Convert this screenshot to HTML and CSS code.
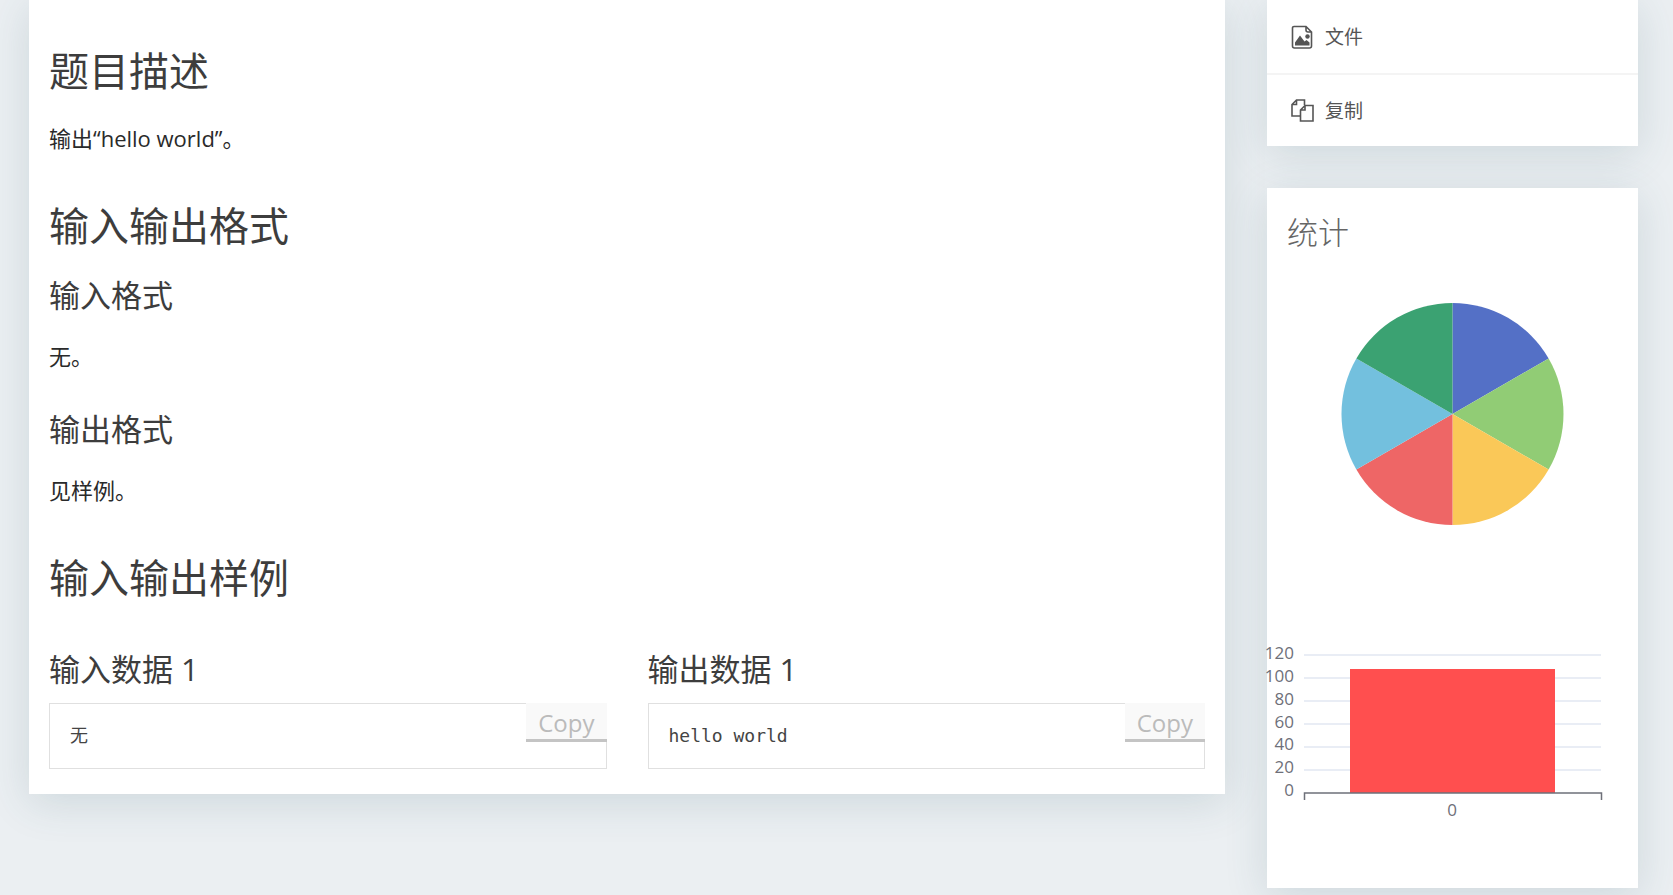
FILE: index.html
```html
<!DOCTYPE html>
<html lang="zh-CN">
  <head>
    <meta charset="utf-8">
    <title>题目描述</title>
    <link rel="stylesheet" href="styles.css">
  </head>

  <body>
    <div class="container">

      <main class="card problem">
        <h2>题目描述</h2>
        <p>输出“hello world”。</p>

        <h2>输入输出格式</h2>
        <h3>输入格式</h3>
        <p>无。</p>
        <h3>输出格式</h3>
        <p>见样例。</p>

        <h2>输入输出样例</h2>
        <div class="samples">
          <section>
            <h3>输入数据 1</h3>
            <div class="sample">
              <pre>无</pre>
              <button type="button" class="copy">Copy</button>
            </div>
          </section>
          <section>
            <h3>输出数据 1</h3>
            <div class="sample">
              <pre>hello world</pre>
              <button type="button" class="copy">Copy</button>
            </div>
          </section>
        </div>
      </main>

      <aside class="side">
        <nav class="card menu">
          <a href="#files">
            <svg class="icon" viewBox="0 0 24 24">
              <path d="M3 1.500h12l5.500 5.500v14a2 2 0 0 1-2 2h-15a2 2 0 0 1-2-2v-18a1.500 1.500 0 0 1 1.500-1.500z M15 1.500v3.500a2 2 0 0 0 2 2h3.500" fill="none" stroke="#555" stroke-width="1.600"/>
              <path d="M4 20.500v-3l5-7 4.500 6 2-1.500 3 2.500v3z" fill="#555"/>
              <circle cx="16.500" cy="11.500" r="2.200" fill="#555"/>
            </svg>
            <span>文件</span>
          </a>
          <a href="#copy">
            <svg class="icon" viewBox="0 0 24 24" fill="none" stroke="#555" stroke-width="1.600">
              <path d="M9 17h-8v-11.500l4.500-4.500h8v5 M1 5.500h4.500v-4.500"/>
              <path d="M9.500 11l4.500-4.500h8v15.500h-12.500z M9.500 11h4.500v-4.500"/>
            </svg>
            <span>复制</span>
          </a>
        </nav>

        <section class="card stats">
          <h3>统计</h3>

          <!-- pie: six equal slices -->
          <svg class="chart" viewBox="0 0 371 340" role="img" aria-label="统计">
            <g transform="translate(185.500 152)">
              <path fill="#5470c6" d="M0 0V-111A111 111 0 0 1 96.130-55.500z"/>
              <path fill="#91cc75" d="M0 0L96.130-55.500A111 111 0 0 1 96.130 55.500z"/>
              <path fill="#fac858" d="M0 0L96.130 55.500A111 111 0 0 1 0 111z"/>
              <path fill="#ee6666" d="M0 0V111A111 111 0 0 1-96.130 55.500z"/>
              <path fill="#73c0de" d="M0 0L-96.130 55.500A111 111 0 0 1-96.130-55.500z"/>
              <path fill="#3ba272" d="M0 0L-96.130-55.500A111 111 0 0 1 0-111z"/>
            </g>
          </svg>

          <!-- bar -->
          <svg class="chart" viewBox="0 0 371 286">
            <g stroke="#e9edf5" stroke-width="2">
              <path d="M37 53h297M37 76h297M37 99h297M37 122h297M37 145h297M37 168h297"/>
            </g>
            <rect x="83" y="67" width="205" height="124" fill="#ff4f4f"/>
            <path d="M37.500 198v-7h297v7" fill="none" stroke="#6e7079" stroke-width="1.500"/>
            <g class="axis" text-anchor="end">
              <text x="27" y="57">120</text>
              <text x="27" y="80">100</text>
              <text x="27" y="103">80</text>
              <text x="27" y="126">60</text>
              <text x="27" y="148">40</text>
              <text x="27" y="171">20</text>
              <text x="27" y="194">0</text>
            </g>
            <text class="axis" x="185" y="214" text-anchor="middle">0</text>
          </svg>
        </section>
      </aside>

    </div>
  </body>
</html>
```

FILE: styles.css
```css
* { box-sizing: border-box; }
body {
  margin: 0;
  background-color: #ebeff2;
  color: #2a2a2a;
  font-family: "Open Sans", "Noto Sans CJK SC", sans-serif;
  font-size: 22px;
  line-height: 34px;
}
.container {
  display: grid;
  grid-template-columns: minmax(0, 1fr) 371px;
  align-items: start;
  gap: 42px;
  padding: 0 35px 7px 29px;
}
.card {
  background-color: #fff;
  box-shadow: 0 8px 40px rgba(50, 95, 105, 0.16);
}
h2, h3 { color: #3d3d3d; font-weight: 400; }
h2 { margin: 43px 0 19px; font-size: 40px; line-height: 56px; }
h3 { margin: 0; font-size: 31px; line-height: 44px; }
p { margin: 22px 0 34px; }

.problem { display: flow-root; padding: 0 20px 25px; }
.samples {
  display: grid;
  grid-template-columns: 1fr 1fr;
  gap: 41px;
  margin-top: 41px;
}
.samples h3 { margin-bottom: 12px; }
.sample { position: relative; border: 1px solid #e0e0e0; }
.sample pre {
  margin: 0;
  padding: 15px 20px;
  color: #444;
  font-family: "DejaVu Sans Mono", "Noto Sans CJK SC", monospace;
  font-size: 18px;
}
.copy {
  position: absolute;
  top: -1px;
  right: -1px;
  padding: 3px 12px 0;
  border: none;
  border-bottom: 3px solid #c4c4c4;
  background-color: #f9f9f9;
  color: #bbb;
  font: 24px/33px "Open Sans", sans-serif;
  cursor: pointer;
}
.copy:hover { color: #888; }

.side { display: grid; gap: 42px; }
.menu a {
  display: flex;
  align-items: center;
  gap: 10px;
  height: 73px;
  padding: 0 24px;
  color: #555;
  font-size: 19px;
  text-decoration: none;
}
.menu a + a { border-top: 2px solid #f4f4f4; }
.menu a:hover { background-color: #fafafa; }
.icon { width: 24px; height: 24px; }

.stats { padding-top: 22px; }
.stats h3 { margin-bottom: 8px; padding: 0 20px; color: #666; font-weight: 300; }
.chart { display: block; width: 100%; overflow: visible; }
.axis { fill: #6e7079; font-size: 17px; }
```
